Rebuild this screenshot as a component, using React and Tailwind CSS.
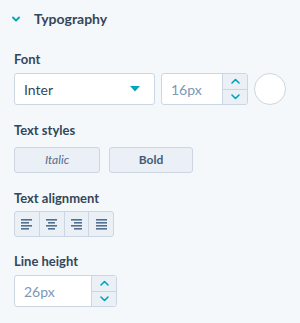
import { useState } from 'react';

const font = { fontFamily: 'Lato, "Open Sans", sans-serif' };

function Caret({ up }) {
  return (
    <svg width="9" height="6" viewBox="0 0 9 6" className="text-[#00a4bd]">
      <path
        d={up ? 'M1 5L4.5 1.5L8 5' : 'M1 1L4.5 4.5L8 1'}
        fill="none"
        stroke="currentColor"
        strokeWidth="1.6"
        strokeLinecap="round"
        strokeLinejoin="round"
      />
    </svg>
  );
}

function Stepper({ value, width }) {
  return (
    <div className={`flex h-[32px] ${width} rounded-[3px] border border-[#cbd6e2] bg-white overflow-hidden`}>
      <div className="flex flex-1 items-center pl-[9px] text-[14px] text-[#7c98b6]">{value}</div>
      <div className="flex w-[25px] flex-col border-l border-[#cbd6e2] bg-[#eaf0f6]">
        <button className="flex flex-1 items-center justify-center border-b border-[#cbd6e2]">
          <Caret up />
        </button>
        <button className="flex flex-1 items-center justify-center">
          <Caret />
        </button>
      </div>
    </div>
  );
}

function AlignIcon({ kind }) {
  const rows = {
    left: [[0, 11], [0, 8], [0, 11], [0, 8]],
    center: [[0, 11], [2, 7], [0, 11], [2, 7]],
    right: [[0, 11], [3, 8], [0, 11], [3, 8]],
    justify: [[0, 11], [0, 11], [0, 11], [0, 11]],
  }[kind];
  return (
    <svg width="11" height="11" viewBox="0 0 11 11">
      {rows.map(([x, w], i) => (
        <rect key={i} x={x} y={i * 3} width={w} height="1.6" fill="#516f90" />
      ))}
    </svg>
  );
}

export default function App() {
  const [open] = useState(true);
  return (
    <div className="h-[323px] w-[300px] bg-[#f5f8fa] text-[#33475b]" style={font}>
      <div className="flex items-center pl-[12px] pt-[11px]">
        <svg width="8" height="6" viewBox="0 0 8 6" className="text-[#00a4bd]">
          <path d="M1 1.5L4 4.5L7 1.5" fill="none" stroke="currentColor" strokeWidth="1.8" strokeLinecap="round" strokeLinejoin="round" />
        </svg>
        <span className="ml-[14px] text-[14px] font-bold leading-[16px]">Typography</span>
      </div>

      {open && (
        <div className="px-[14px]">
          <div className="mt-[24px] text-[13px] font-bold leading-[16px]">Font</div>
          <div className="mt-[6px] flex items-center">
            <div className="flex h-[32px] w-[141px] items-center justify-between rounded-[3px] border border-[#cbd6e2] bg-white pl-[9px] pr-[14px]">
              <span className="text-[14px] text-[#33475b]">Inter</span>
              <svg width="10" height="6" viewBox="0 0 10 6">
                <path d="M0 0H10L5 5.5Z" fill="#00a4bd" />
              </svg>
            </div>
            <div className="ml-[6px]">
              <Stepper value="16px" width="w-[87px]" />
            </div>
            <div className="ml-[6px] h-[32px] w-[32px] rounded-full border border-[#cbd6e2] bg-white" />
          </div>

          <div className="mt-[17px] text-[13px] font-bold leading-[16px]">Text styles</div>
          <div className="mt-[9px] flex gap-[9px]">
            <button className="h-[26px] w-[86px] rounded-[3px] border border-[#cbd6e2] bg-[#eaf0f6] text-[12px] italic text-[#516f90]">
              Italic
            </button>
            <button className="h-[26px] w-[84px] rounded-[3px] border border-[#cbd6e2] bg-[#eaf0f6] text-[12px] font-bold text-[#425b76]">
              Bold
            </button>
          </div>

          <div className="mt-[17px] text-[13px] font-bold leading-[16px]">Text alignment</div>
          <div className="mt-[5px] flex h-[26px] w-[100px] overflow-hidden rounded-[3px] border border-[#cbd6e2] bg-[#eaf0f6]">
            {['left', 'center', 'right', 'justify'].map((k, i) => (
              <button
                key={k}
                className={`flex flex-1 items-center justify-center ${i > 0 ? 'border-l border-[#cbd6e2]' : ''}`}
              >
                <AlignIcon kind={k} />
              </button>
            ))}
          </div>

          <div className="mt-[16px] text-[13px] font-bold leading-[16px]">Line height</div>
          <div className="mt-[6px]">
            <Stepper value="26px" width="w-[103px]" />
          </div>
        </div>
      )}
    </div>
  );
}
